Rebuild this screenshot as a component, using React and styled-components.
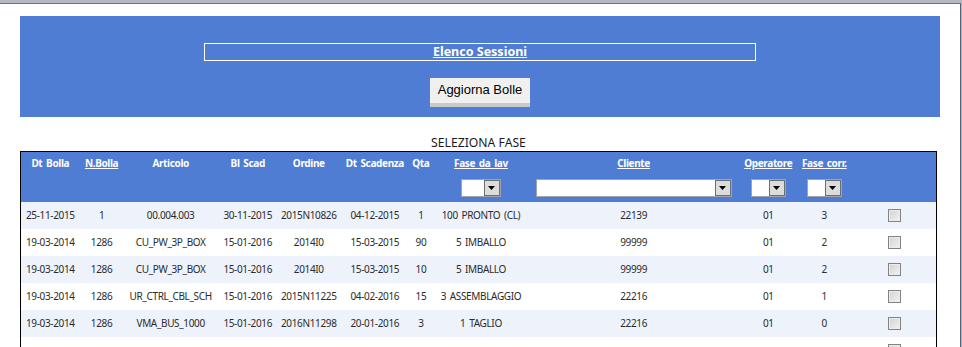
import styled, { createGlobalStyle } from "styled-components";

const GlobalStyle = createGlobalStyle`
  html, body {
    margin: 0;
    padding: 0;
    background: #ffffff;
    overflow: hidden;
  }
`;

const COLUMNS = [
  { key: "dtBolla", label: "Dt Bolla", width: 59 },
  { key: "nBolla", label: "N.Bolla", width: 44, link: true },
  { key: "articolo", label: "Articolo", width: 94 },
  { key: "blScad", label: "Bl Scad", width: 60 },
  { key: "ordine", label: "Ordine", width: 62 },
  { key: "dtScad", label: "Dt Scadenza", width: 70 },
  { key: "qta", label: "Qta", width: 22 },
  { key: "fase", label: "Fase da lav", width: 98, link: true, filter: 40 },
  { key: "cliente", label: "Cliente", width: 207, link: true, filter: 196 },
  { key: "operatore", label: "Operatore", width: 62, link: true, filter: 35 },
  { key: "faseCorr", label: "Fase corr.", width: 50, link: true, filter: 35 },
  { key: "sel", label: "", width: 87 },
];

const ROWS = [
  ["25-11-2015", "1", "00.004.003", "30-11-2015", "2015N10826", "04-12-2015", "1", "100 PRONTO (CL)", "22139", "01", "3"],
  ["19-03-2014", "1286", "CU_PW_3P_BOX", "15-01-2016", "2014I0", "15-03-2015", "90", "5 IMBALLO", "99999", "01", "2"],
  ["19-03-2014", "1286", "CU_PW_3P_BOX", "15-01-2016", "2014I0", "15-03-2015", "10", "5 IMBALLO", "99999", "01", "2"],
  ["19-03-2014", "1286", "UR_CTRL_CBL_SCH", "15-01-2016", "2015N11225", "04-02-2016", "15", "3 ASSEMBLAGGIO", "22216", "01", "1"],
  ["19-03-2014", "1286", "VMA_BUS_1000", "15-01-2016", "2016N11298", "20-01-2016", "3", "1 TAGLIO", "22216", "01", "0"],
  ["", "", "", "", "", "", "", "", "", "", ""],
];

function DropSelect({ width }) {
  return (
    <SelectBox style={{ width }}>
      <SelectField />
      <SelectButton>
        <svg width="7" height="4" viewBox="0 0 7 4">
          <path d="M0 0 H7 L3.5 4 Z" fill="#000" />
        </svg>
      </SelectButton>
    </SelectBox>
  );
}

export default function App() {
  return (
    <>
      <GlobalStyle />
      <Frame>
        <Viewport>
          <Banner>
            <TitleBox>
              <Title>Elenco Sessioni</Title>
            </TitleBox>
            <RefreshButton>Aggiorna Bolle</RefreshButton>
          </Banner>

          <Caption>SELEZIONA FASE</Caption>

          <Grid>
            <colgroup>
              {COLUMNS.map((c) => (
                <col key={c.key} style={{ width: c.width }} />
              ))}
            </colgroup>
            <thead>
              <LabelRow>
                {COLUMNS.map((c) => (
                  <HeadCell key={c.key}>
                    {c.link ? <HeadLink>{c.label}</HeadLink> : c.label}
                  </HeadCell>
                ))}
              </LabelRow>
              <FilterRow>
                {COLUMNS.map((c) => (
                  <HeadCell key={c.key}>
                    {c.filter ? <DropSelect width={c.filter} /> : null}
                  </HeadCell>
                ))}
              </FilterRow>
            </thead>
            <tbody>
              {ROWS.map((row, i) => (
                <DataRow key={i} $alt={i % 2 === 0}>
                  {row.map((v, j) => (
                    <Cell key={j}>{v}</Cell>
                  ))}
                  <Cell>
                    <Check type="checkbox" />
                  </Cell>
                </DataRow>
              ))}
            </tbody>
          </Grid>
        </Viewport>
      </Frame>
    </>
  );
}

const Frame = styled.div`
  width: 962px;
  height: 347px;
  box-sizing: border-box;
  border-top: 3px solid #b6b9bf;
  border-right: 1px solid #a9b0bd;
  overflow: hidden;
`;

const Viewport = styled.div`
  height: 100%;
  box-sizing: border-box;
  border-top: 1px solid #6c7380;
  border-right: 1px solid #56647a;
  padding: 12px 20px 0 20px;
`;

const Banner = styled.div`
  background: #4f7dd3;
  height: 101px;
  box-sizing: border-box;
  padding-top: 27px;
  display: flex;
  flex-direction: column;
  align-items: center;
`;

const TitleBox = styled.div`
  width: 552px;
  height: 18px;
  box-sizing: border-box;
  border: 1px solid #ffffff;
  display: flex;
  justify-content: center;
  align-items: center;
`;

const Title = styled.span`
  font-family: "Noto Sans", "Open Sans", sans-serif;
  font-weight: bold;
  font-size: 12.5px;
  color: #ffffff;
  text-decoration: underline;
  line-height: 16px;
`;

const RefreshButton = styled.button`
  margin-top: 17px;
  width: 100px;
  height: 29px;
  padding: 0 0 2px 0;
  border: none;
  border-bottom: 4px solid #c9c9c9;
  background: #f0f0f0;
  font-family: "Liberation Sans", Arial, sans-serif;
  font-size: 13px;
  color: #000000;
`;

const Caption = styled.div`
  width: 917px;
  margin-top: 17px;
  text-align: center;
  font-family: "Noto Sans", "Open Sans", sans-serif;
  font-size: 12.2px;
  line-height: 17px;
  color: #1a1a1a;
`;

const Grid = styled.table`
  width: 917px;
  table-layout: fixed;
  border-collapse: collapse;
  border: 1px solid #000000;
  font-family: "Noto Sans", "Open Sans", sans-serif;
`;

const LabelRow = styled.tr`
  background: #4f7dd3;
  height: 22px;
`;

const FilterRow = styled.tr`
  background: #4f7dd3;
  height: 28px;
`;

const HeadCell = styled.th`
  padding: 0;
  text-align: center;
  vertical-align: middle;
  font-size: 10px;
  font-weight: bold;
  letter-spacing: -0.35px;
  word-spacing: 1.5px;
  color: #ffffff;
  white-space: nowrap;
`;

const HeadLink = styled.span`
  text-decoration: underline;
`;

const SelectBox = styled.div`
  display: inline-flex;
  height: 18px;
  box-sizing: border-box;
  border: 1px solid #a4a4a4;
  background: #ffffff;
  vertical-align: middle;
`;

const SelectField = styled.div`
  flex: 1;
`;

const SelectButton = styled.div`
  width: 16px;
  box-sizing: border-box;
  border: 1px solid #6f6f6f;
  background: #dcdcdc;
  display: flex;
  align-items: center;
  justify-content: center;
`;

const DataRow = styled.tr`
  height: 27px;
  background: ${(p) => (p.$alt ? "#edf2fb" : "#ffffff")};
`;

const Cell = styled.td`
  padding: 0;
  text-align: center;
  vertical-align: middle;
  font-size: 10px;
  letter-spacing: -0.35px;
  word-spacing: 1.5px;
  color: #2b2b2b;
  white-space: nowrap;
`;

const Check = styled.input`
  appearance: none;
  margin: 0 0 0 3px;
  width: 13px;
  height: 13px;
  border: 1px solid #838383;
  background: linear-gradient(135deg, #d2d2d2, #f2f2f2);
  box-shadow: inset 0 0 0 1px #ececec;
  vertical-align: middle;
`;
